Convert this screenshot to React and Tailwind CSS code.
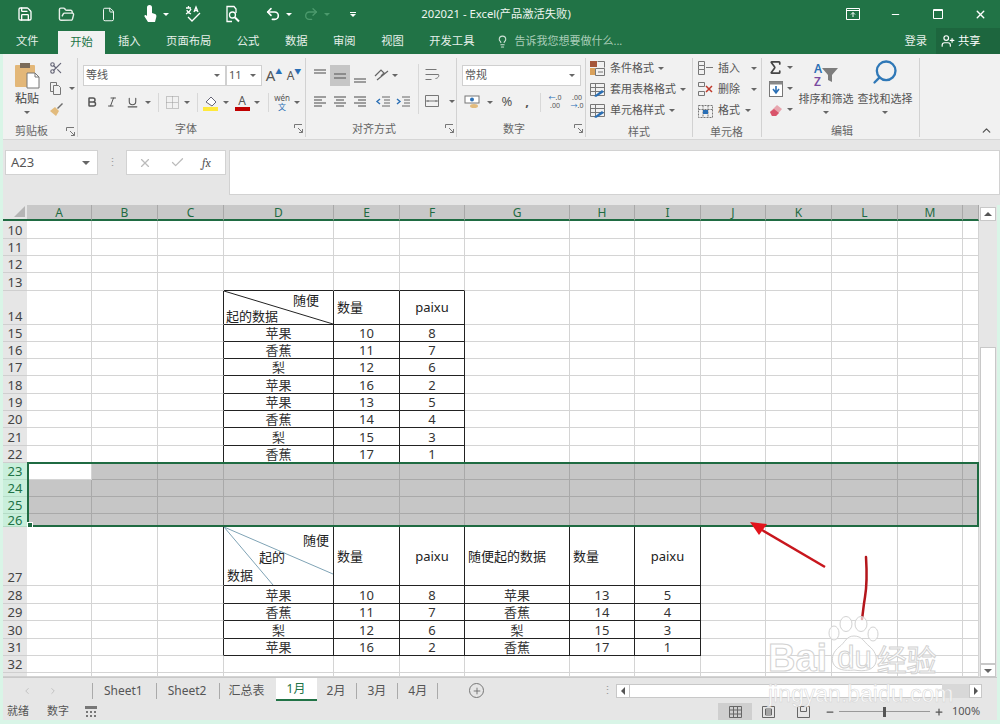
import { Save, FolderOpen, File, Undo2, Redo2, Scissors, Bold, Italic, Underline, Lightbulb, Sigma, X, Check, Plus, Minus, ChevronUp, ChevronLeft, ChevronRight, Search, UserPlus } from "lucide-react";

const colWidths = ["A", "B", "C", "D", "E", "F", "G", "H", "I", "J", "K", "L", "M", ""];
const rowHeights = { 10: "h-[18px]", 11: "h-[17px]", 12: "h-[17px]", 13: "h-[18px]", 14: "h-[34px]", 15: "h-[17px]", 16: "h-[17px]", 17: "h-[17px]", 18: "h-[18px]", 19: "h-[17px]", 20: "h-[17px]", 21: "h-[18px]", 22: "h-[17px]", 23: "h-[17px]", 24: "h-[17px]", 25: "h-[17px]", 26: "h-[13px]", 27: "h-[59px]", 28: "h-[18px]", 29: "h-[17px]", 30: "h-[18px]", 31: "h-[17px]", 32: "h-[17px]", 33: "h-[4px]" };

const firstTable = [
  ["苹果", "10", "8"], ["香蕉", "11", "7"], ["梨", "12", "6"], ["苹果", "16", "2"],
  ["苹果", "13", "5"], ["香蕉", "14", "4"], ["梨", "15", "3"], ["香蕉", "17", "1"],
];
const secondTable = [
  ["苹果", "10", "8", "苹果", "13", "5"], ["香蕉", "11", "7", "香蕉", "14", "4"],
  ["梨", "12", "6", "梨", "15", "3"], ["苹果", "16", "2", "香蕉", "17", "1"],
];

const inTable = (r, c) => (r >= 14 && r <= 22 && c >= 3 && c <= 5) || (r >= 27 && r <= 31 && c >= 3 && c <= 8);

const cellText = (r, c) => {
  if (r >= 15 && r <= 22 && c >= 3 && c <= 5) return firstTable[r - 15][c - 3];
  if (r >= 28 && r <= 31 && c >= 3 && c <= 8) return secondTable[r - 28][c - 3];
  return "";
};

const Caret = ({ className = "" }) => (
  <span className={`inline-block w-0 h-0 border-x-[3px] border-x-transparent border-t-[3px] border-t-[#666] ${className}`} />
);
const WhiteCaret = ({ className = "" }) => (
  <span className={`inline-block w-0 h-0 border-x-[3px] border-x-transparent border-t-[3px] border-t-white ${className}`} />
);

const Launcher = ({ className = "" }) => (
  <svg width="9" height="9" viewBox="0 0 9 9" className={className} fill="none" stroke="#777">
    <path d="M.5 4V.5H8M8.5 8.5L4 4M8.5 5v3.5H5" />
  </svg>
);

const Lines = ({ rows }) => (
  <svg width="16" height="16" viewBox="0 0 16 16" stroke="#666" strokeWidth="1.2">
    {rows.map((l, i) => <path key={i} d={`M${l[0]} ${l[2]}H${l[1]}`} />)}
  </svg>
);

const Group = ({ width, label, labelClass, launcher, children }) => (
  <div className={`${width} h-[79px] mt-1 flex flex-col border-r border-[#d2d2d2] shrink-0`}>
    <div className="h-[64px] flex flex-col">{children}</div>
    <div className="flex-1 flex items-center pt-[3px] text-[11px] text-[#666]">
      <span className={labelClass}>{label}</span>
      {launcher && <Launcher className="ml-auto mr-[2px]" />}
    </div>
  </div>
);

const Combo = ({ width, text }) => (
  <div className={`${width} h-[21px] bg-white border border-[#d0d0d0] flex items-center justify-between px-[2px] text-[11px] text-[#555] shrink-0`}>
    <span>{text}</span>
    <Caret className="mr-[3px]" />
  </div>
);

const Slot = ({ width = "w-5", className = "", children }) => (
  <div className={`${width} h-5 flex items-center justify-center shrink-0 ${className}`}>{children}</div>
);

const Sep = ({ className = "" }) => <div className={`w-px h-[19px] bg-[#d8d8d8] shrink-0 ${className}`} />;

const GridIcon = ({ children }) => (
  <svg width="17" height="17" viewBox="0 0 17 17" fill="none" stroke="#777" className="shrink-0">
    <path d="M1.5 2.5h14v12h-14zM1.5 6.5h14M1.5 10.5h14M6.5 2.5v12" />
    {children}
  </svg>
);

const IconRow = ({ icon, text, caret = "ml-1" }) => (
  <div className="h-[21px] flex items-center text-[11px] text-[#555]">
    {icon}
    <span className="ml-1 whitespace-nowrap">{text}</span>
    <Caret className={caret} />
  </div>
);

const TitleBar = () => (
  <div className="h-[28px] bg-[#217346] flex items-center text-white shrink-0">
    <Save size={16} className="ml-[17px]" />
    <FolderOpen size={17} className="ml-[25px] text-[#e8f0ea]" />
    <File size={15} strokeWidth={1.5} className="ml-[26px]" />
    <svg width="14" height="18" viewBox="0 0 14 18" fill="white" className="ml-[27px]">
      <path d="M4 2.5a2.5 2.5 0 015 0V8l3 1c1.5.6 1.5 2 1.3 3L12 17H5L1.5 11.5c-.5-1 .7-2 1.6-1.2L4 11z" />
    </svg>
    <WhiteCaret className="ml-[6px]" />
    <svg width="18" height="18" viewBox="0 0 18 18" fill="none" stroke="white" strokeWidth="1.3" className="ml-[15px]">
      <path d="M2 3h5M4.5 1v2M3 5c0 2 2 3 4 4M7 4C6 7 4 8 2 9M10 7l2-5 2 5M11 5.5h2M4 12l4 4 8-8" />
    </svg>
    <svg width="18" height="18" viewBox="0 0 18 18" fill="none" stroke="white" strokeWidth="1.3" className="ml-[22px]">
      <path d="M8 16.5H3v-15h7l2 2.500V8" />
      <circle cx="8.500" cy="10" r="3" />
      <path d="M11 12.500l4 4" strokeWidth="2" />
    </svg>
    <Undo2 size={16} strokeWidth={2.4} className="ml-[23px]" />
    <WhiteCaret className="ml-[5px]" />
    <Redo2 size={16} className="ml-[11px] text-[#4c9a6d]" />
    <span className="inline-block w-0 h-0 border-x-[3px] border-x-transparent border-t-[3px] border-t-[#4c9a6d] ml-[5px]" />
    <div className="ml-[20px] flex flex-col items-center gap-[1px]">
      <div className="w-[6px] h-px bg-white" />
      <WhiteCaret />
    </div>
    <span className="ml-[65px] w-[150px] text-center text-[11.3px] whitespace-nowrap text-[#eef5f0]">202021 - Excel(产品激活失败)</span>
    <svg width="14" height="12" viewBox="0 0 14 12" fill="none" stroke="white" className="ml-[275px]">
      <path d="M.5.5h13v11H.5zM.5 2.500h13M7 9V4.500M5 6.500l2-2 2 2" />
    </svg>
    <Minus size={11} strokeWidth={2.5} className="ml-[30px]" />
    <svg width="10" height="10" viewBox="0 0 10 10" fill="none" stroke="white" className="ml-[32px]">
      <path d="M.5.5h9v9h-9zM.5 1.500h9" />
    </svg>
    <X size={13} strokeWidth={2.6} className="ml-[31px]" />
  </div>
);

const TabItem = ({ className, children }) => (
  <span className={`text-[11.3px] text-[#e6f0ea] whitespace-nowrap ${className}`}>{children}</span>
);

const TabBar = () => (
  <div className="h-[26px] bg-[#217346] flex items-center shrink-0">
    <TabItem className="ml-4">文件</TabItem>
    <div className="ml-[19.4px] w-[47px] h-[23px] mt-[3px] bg-[#f1f1f1] text-[#217346] text-[11.3px] flex items-center justify-center">开始</div>
    <TabItem className="ml-[13px]">插入</TabItem>
    <TabItem className="ml-[25.5px]">页面布局</TabItem>
    <TabItem className="ml-[25.5px]">公式</TabItem>
    <TabItem className="ml-[25.5px]">数据</TabItem>
    <TabItem className="ml-[25.5px]">审阅</TabItem>
    <TabItem className="ml-[25.5px]">视图</TabItem>
    <TabItem className="ml-[25.5px]">开发工具</TabItem>
    <Lightbulb size={13} className="ml-[22px] text-[#cfe3d7]" />
    <span className="ml-[5px] text-[11px] text-[#a9cdb8] whitespace-nowrap">告诉我您想要做什么...</span>
    <TabItem className="ml-auto">登录</TabItem>
    <div className="ml-[9px] w-[64px] h-[26px] bg-[#1d663e] flex items-center text-white text-[11.3px]">
      <UserPlus size={14} className="ml-[5px]" />
      <span className="ml-[3px]">共享</span>
    </div>
  </div>
);

const Ribbon = () => (
  <div className="h-[86px] bg-[#f1f1f1] border-b border-[#d6d6d6] flex shrink-0 text-[#555]">
    <Group width="w-[75px]" label="剪贴板" labelClass="ml-3" launcher>
      <div className="flex h-full">
        <div className="ml-[9px] w-[30px] flex flex-col items-center">
          <svg width="26" height="27" viewBox="0 0 26 27" className="mt-[4px]">
            <rect x="1" y="3" width="20" height="22" rx="1" fill="#e3b778" />
            <rect x="6" y="1" width="10" height="5" fill="#7b6b59" />
            <path d="M13 11h8l4 4v11H13z" fill="white" stroke="#777" />
            <path d="M21 11v4h4" fill="none" stroke="#777" />
          </svg>
          <span className="text-[12px] leading-[14px] mt-[3px] text-[#444]">粘贴</span>
          <Caret className="mt-[5px]" />
        </div>
        <div className="ml-[2px] -mt-[1px] flex flex-col">
          <Slot width="w-6" className="h-[21px]"><Scissors size={14} className="text-[#667]" /></Slot>
          <div className="h-[21px] flex items-center">
            <svg width="15" height="15" viewBox="0 0 15 15" fill="none" stroke="#777" className="ml-1">
              <path d="M2.500 1.500h6v3M2.500 1.500v9h3M5.500 4.500h5l2 2v7h-7z" />
            </svg>
            <Caret className="ml-[6px]" />
          </div>
          <Slot width="w-6" className="h-[21px]">
            <svg width="15" height="15" viewBox="0 0 15 15">
              <path d="M1 9l5-4 4 4-3 5z" fill="#e2bb7d" />
              <path d="M8 6l5-5 1 1-5 5z" fill="#6d6d6d" />
            </svg>
          </Slot>
        </div>
      </div>
    </Group>

    <Group width="w-[228px]" label="字体" labelClass="ml-[97px]" launcher>
      <div className="pl-[5px] pt-[7px] flex items-center">
        <Combo width="w-[143px]" text="等线" />
        <Combo width="w-[36px]" text="11" />
        <Slot className="ml-[2px] text-[15px] text-[#555]">A<sup className="text-[7px] text-[#2a6fb5]">▲</sup></Slot>
        <Slot className="text-[12px] text-[#555]">A<sup className="text-[7px] text-[#2a6fb5]">▼</sup></Slot>
      </div>
      <div className="mt-[6px] flex items-center">
        <Slot className="ml-[4px]"><Bold size={12} strokeWidth={3} /></Slot>
        <Slot><Italic size={12} /></Slot>
        <Slot><Underline size={13} /></Slot>
        <Slot width="w-3"><Caret /></Slot>
        <Sep className="ml-1" />
        <Slot className="ml-[3px]">
          <svg width="13" height="13" viewBox="0 0 13 13" fill="none" stroke="#999" strokeDasharray="1 1">
            <path d="M.5.5h12v12H.5zM6.500.5v12M.5 6.500h12" />
          </svg>
        </Slot>
        <Slot width="w-[10px]"><Caret /></Slot>
        <Sep className="ml-[5px]" />
        <Slot className="ml-[3px]">
          <svg width="16" height="17" viewBox="0 0 16 17">
            <path d="M3 8l5-5 5 5-4 4z" fill="white" stroke="#667" />
            <rect x="0" y="13" width="15" height="4" fill="#ffe93b" />
          </svg>
        </Slot>
        <Slot width="w-[10px]"><Caret /></Slot>
        <Slot className="ml-[1px] flex-col">
          <span className="text-[12px] leading-[13px] text-[#555]">A</span>
          <span className="w-[15px] h-[4px] bg-[#c00000]" />
        </Slot>
        <Slot width="w-[10px]"><Caret /></Slot>
        <Sep className="ml-[6px]" />
        <Slot className="ml-[3px] flex-col">
          <span className="text-[8px] leading-[8px]">wén</span>
          <span className="text-[8px] leading-[9px] text-[#2a6fb5]">文</span>
        </Slot>
        <Slot width="w-[9px]"><Caret /></Slot>
      </div>
    </Group>

    <Group width="w-[151px]" label="对齐方式" labelClass="ml-[46px]" launcher>
      <div className="flex">
        <div className="pl-[4px] pt-[7px] flex flex-col">
          <div className="flex items-center">
            <Slot><Lines rows={[[2, 14, 2], [2, 14, 5]]} /></Slot>
            <div className="w-5 h-[21px] bg-[#c6c6c6] flex items-center justify-center"><Lines rows={[[2, 14, 6], [2, 14, 10]]} /></div>
            <Slot><Lines rows={[[2, 14, 11], [2, 14, 14]]} /></Slot>
            <Slot className="ml-[2px]">
              <svg width="17" height="15" viewBox="0 0 17 15" fill="none" stroke="#666" strokeWidth="1.2">
                <path d="M1 8l6-6 3 3-3 3M3 12L14 3" />
              </svg>
            </Slot>
            <Slot width="w-[6px]"><Caret /></Slot>
          </div>
          <div className="mt-[6px] flex items-center">
            <Slot><Lines rows={[[2, 14, 3], [2, 10, 6], [2, 14, 9], [2, 10, 12]]} /></Slot>
            <Slot><Lines rows={[[2, 14, 3], [4, 12, 6], [2, 14, 9], [4, 12, 12]]} /></Slot>
            <Slot><Lines rows={[[2, 14, 3], [6, 14, 6], [2, 14, 9], [6, 14, 12]]} /></Slot>
            <Slot className="ml-[3px]">
              <svg width="16" height="16" viewBox="0 0 16 16" fill="none" stroke="#666">
                <path d="M7 3h8M9 6h6M9 9h6M7 12h8" />
                <path d="M5 5L2 7.500 5 10" stroke="#2a6fb5" strokeWidth="1.4" />
              </svg>
            </Slot>
            <Slot>
              <svg width="16" height="16" viewBox="0 0 16 16" fill="none" stroke="#666">
                <path d="M7 3h8M9 6h6M9 9h6M7 12h8" />
                <path d="M2 5l3 2.500L2 10" stroke="#2a6fb5" strokeWidth="1.4" />
              </svg>
            </Slot>
          </div>
        </div>
        <Sep className="ml-[5px] mt-[6px] !h-[50px]" />
        <div className="pt-[7px] flex flex-col">
          <Slot className="ml-[3px]">
            <svg width="16" height="16" viewBox="0 0 16 16" fill="none" stroke="#777">
              <path d="M1.500 2.500h11M1.500 7.500h13c1 2-1 4-3 4M1.500 12.500h6" />
            </svg>
          </Slot>
          <div className="mt-[6px] flex items-center">
            <Slot className="ml-[3px]">
              <svg width="16" height="16" viewBox="0 0 16 16" fill="none" stroke="#777">
                <path d="M1.500 2.500h13v11h-13zM1.500 8h13M5 8l-2 0M11 8h2" />
              </svg>
            </Slot>
            <Slot width="w-[10px]" className="ml-[5px]"><Caret /></Slot>
          </div>
        </div>
      </div>
    </Group>

    <Group width="w-[129px]" label="数字" labelClass="ml-[46px]" launcher>
      <div className="pl-[5px] pt-[7px]"><Combo width="w-[119px]" text="常规" /></div>
      <div className="mt-[6px] flex items-center">
        <Slot className="ml-[5px]">
          <svg width="16" height="16" viewBox="0 0 16 16">
            <rect x="1" y="2" width="14" height="7" fill="#fff" stroke="#777" />
            <circle cx="8" cy="5.500" r="2" fill="#2a6fb5" />
            <ellipse cx="10" cy="12" rx="4" ry="2" fill="#e2bb7d" />
          </svg>
        </Slot>
        <Slot width="w-[8px]" className="ml-1"><Caret /></Slot>
        <Slot className="ml-[3px] text-[13px]">%</Slot>
        <Slot className="text-[13px] font-bold">,</Slot>
        <Sep className="ml-[3px]" />
        <Slot width="w-[22px]" className="ml-[3px] flex-col text-[7px] leading-[8px]">
          <span><span className="text-[#2a6fb5]">←</span>.0</span>
          <span>.00</span>
        </Slot>
        <Slot width="w-[22px]" className="flex-col text-[7px] leading-[8px]">
          <span>.00</span>
          <span><span className="text-[#2a6fb5]">→</span>.0</span>
        </Slot>
      </div>
    </Group>

    <Group width="w-[107px]" label="样式" labelClass="ml-[42px]">
      <div className="pl-[3px]">
        <IconRow text="条件格式" icon={
          <svg width="17" height="17" viewBox="0 0 17 17" fill="none" stroke="#777" className="shrink-0">
            <rect x="1" y="1" width="7" height="6" fill="#a5573a" stroke="none" />
            <rect x="1" y="8" width="5" height="7" fill="#d9a15b" stroke="none" />
            <path d="M8.500 1.500h7v6M6.500 8.500h9v7h-9zM9 12h5" />
          </svg>
        } />
        <IconRow text="套用表格格式" icon={<GridIcon><path d="M5 15l8-6 2 2-8 5z" fill="#2a6fb5" stroke="none" /></GridIcon>} />
        <IconRow text="单元格样式" icon={<GridIcon><path d="M5 15l8-6 2 2-8 5z" fill="#2a6fb5" stroke="none" /></GridIcon>} />
      </div>
    </Group>

    <Group width="w-[69px]" label="单元格" labelClass="ml-[17px]">
      <div className="pl-[4px]">
        <IconRow text="插入" caret="ml-[11px]" icon={
          <svg width="17" height="17" viewBox="0 0 17 17" fill="none" stroke="#777" className="shrink-0">
            <path d="M1.500 1.500h6v4h-6zM1.500 5.500v4h6v-4M1.500 9.500v5h6v-5M9 7.500h7" />
          </svg>
        } />
        <IconRow text="删除" caret="ml-[11px]" icon={
          <svg width="17" height="17" viewBox="0 0 17 17" fill="none" stroke="#777" className="shrink-0">
            <path d="M1.500 1.500h6v4h-6zM1.500 10.500h6v4h-6z" />
            <path d="M9 5l6 6M15 5l-6 6" stroke="#c0392b" strokeWidth="1.5" />
          </svg>
        } />
        <IconRow text="格式" caret="ml-[5px]" icon={
          <svg width="17" height="17" viewBox="0 0 17 17" fill="none" stroke="#777" className="shrink-0" strokeDasharray="2 1">
            <path d="M1.500 3.500h14v12h-14zM1.500 7.500h14M6 3.500v12M11 3.500v12" />
            <rect x="6" y="8" width="5" height="4" fill="#2a6fb5" stroke="none" />
          </svg>
        } />
      </div>
    </Group>

    <Group width="w-[158px]" label="编辑" labelClass="ml-[69px]">
      <div className="flex">
        <div className="pl-[5px] -mt-[1px] w-[34px] shrink-0">
          <div className="h-[21px] flex items-center">
            <Sigma size={17} strokeWidth={2.4} className="text-[#444]" />
            <Caret className="ml-[3px]" />
          </div>
          <div className="h-[21px] flex items-center">
            <svg width="15" height="16" viewBox="0 0 15 16" className="ml-[2px]">
              <rect x=".5" y=".5" width="13" height="15" fill="#fff" stroke="#777" />
              <rect x=".5" y=".5" width="13" height="3" fill="#888" />
              <path d="M7 5v6M4 8l3 4 3-4" stroke="#2a6fb5" strokeWidth="1.6" fill="none" />
            </svg>
            <Caret className="ml-[3px]" />
          </div>
          <div className="h-[21px] flex items-center">
            <svg width="15" height="14" viewBox="0 0 15 14" className="ml-[2px]">
              <path d="M1 9l7-7 5 4-6 7H3z" fill="#e7a5ae" />
              <path d="M1 9l4-3 5 4-3 3H3z" fill="#d9536a" />
            </svg>
            <Caret className="ml-[3px]" />
          </div>
        </div>
        <div className="w-[60px] flex flex-col items-center shrink-0">
          <div className="h-[31px] mt-[1px] flex items-center">
            <div className="flex flex-col text-[12px] leading-[13px] font-semibold text-[#2a6fb5]">
              <span>A</span>
              <span className="text-[#7a4aa0]">Z</span>
            </div>
            <svg width="16" height="16" viewBox="0 0 16 16" fill="#7d7d7d"><path d="M0 1h16L10 8v7l-4-2V8z" /></svg>
          </div>
          <span className="text-[11px] leading-[14px] mt-[2px] whitespace-nowrap">排序和筛选</span>
          <Caret className="mt-[5px]" />
        </div>
        <div className="w-[58px] flex flex-col items-center shrink-0">
          <div className="h-[31px] -mt-[2px] flex items-center">
            <Search size={28} strokeWidth={2} className="text-[#2f78b7] -scale-x-100" />
          </div>
          <span className="text-[11px] leading-[14px] mt-[5px] whitespace-nowrap">查找和选择</span>
          <Caret className="mt-[5px]" />
        </div>
      </div>
    </Group>

    <div className="flex-1 flex items-end justify-end pr-[7px] pb-[2px]">
      <ChevronUp size={13} strokeWidth={2.4} />
    </div>
  </div>
);

const FormulaBar = () => (
  <div className="h-[65px] bg-[#e6e6e6] flex pt-[10px] shrink-0">
    <div className="ml-[2px] w-[93px] h-[25px] bg-white border border-[#d2d2d2] flex items-center justify-between px-[5px] text-[13px] text-[#555]">
      <span>A23</span>
      <Caret className="mr-[2px] border-x-[4px] border-t-[4px]" />
    </div>
    <div className="w-7 h-[25px] flex items-center justify-center text-[#999] text-[11px]">⋮</div>
    <div className="w-[100px] h-[25px] bg-white border border-[#d2d2d2] flex items-center text-[#bbb]">
      <X size={14} className="ml-[11px]" />
      <Check size={15} className="ml-[18px]" />
      <span className="ml-[17px] text-[12px] italic font-serif text-[#555]">fx</span>
    </div>
    <div className="ml-[3px] flex-1 h-[45px] bg-white border border-[#d2d2d2]" />
  </div>
);

const CellBody = ({ r, c }) => {
  if (r === 14 && c === 3) {
    return (
      <div className="w-full h-full flex flex-col text-[#222]">
        <svg className="absolute inset-0 w-full h-full" viewBox="0 0 109 33" preserveAspectRatio="none">
          <path d="M0 0L109 33" stroke="#222" />
        </svg>
        <span className="self-end mr-[14px] mt-[1px] leading-[16px]">随便</span>
        <span className="ml-[2px] leading-[16px]">起的数据</span>
      </div>
    );
  }
  if (r === 27 && c === 3) {
    return (
      <div className="w-full h-full flex flex-col text-[#222]">
        <svg className="absolute inset-0 w-full h-full" viewBox="0 0 109 58" preserveAspectRatio="none">
          <path d="M0 0L49 58M0 0L109 47" stroke="#7fa3b5" fill="none" />
        </svg>
        <span className="self-end mr-[4px] mt-[5px] leading-[16px]">随便</span>
        <span className="ml-[35px] mt-[1px] leading-[16px]">起的</span>
        <span className="ml-[3px] mt-[2px] leading-[16px]">数据</span>
      </div>
    );
  }
  if ((r === 14 && c === 4) || (r === 27 && (c === 4 || c === 7))) {
    return <span className="w-full h-full flex items-center pl-[3px] text-[#222]">数量</span>;
  }
  if ((r === 14 && c === 5) || (r === 27 && (c === 5 || c === 8))) {
    return <span className="w-full h-full flex items-center justify-center text-[#222]">paixu</span>;
  }
  if (r === 27 && c === 6) {
    return <span className="w-full h-full flex items-center pl-[3px] text-[#222] whitespace-nowrap">随便起的数据</span>;
  }
  return cellText(r, c);
};

const SheetGrid = () => {
  const rows = Object.keys(rowHeights).map(Number);
  return (
    <div className="relative grid grid-cols-[24px_65px_66px_66px_110px_66px_65px_105px_65px_66px_65px_66px_66px_65px_16px] w-[976px] text-[13px] text-[#333] overflow-hidden">
      <div className="h-[16px] bg-[#e6e6e6] border-b-2 border-[#1f6b42] flex items-end justify-end">
        <span className="w-0 h-0 mr-[2px] mb-[2px] border-l-[11px] border-l-transparent border-b-[11px] border-b-[#b5b5b5]" />
      </div>
      {colWidths.map((c, i) => (
        <div key={i} className="h-[16px] pt-[1px] bg-[#c8c8c8] border-r border-r-[#a8a8a8] border-b-2 border-b-[#1f6b42] text-[#1f6b42] text-[12px] leading-[13px] text-center">{c}</div>
      ))}
      {rows.map((r) => {
        const selected = r >= 23 && r <= 26;
        return [
          <div key={r} className={`${rowHeights[r]} border-b flex items-end justify-center overflow-hidden ${r === 26 ? "leading-[12px]" : "leading-[16px]"} ${selected ? "bg-[#c9efdb] border-[#b5dcc6] text-[#217346]" : "bg-[#e6e6e6] border-[#cfcfcf] text-[#444]"}`}>
            {r < 33 ? r : ""}
          </div>,
          ...colWidths.map((_, c) => {
            const active = r === 23 && c === 0;
            const gray = selected && !active;
            const right = inTable(r, c) || inTable(r, c + 1);
            const bottom = inTable(r, c) || inTable(r + 1, c);
            const base = gray ? "bg-[#c6c6c6]" : "bg-white";
            const rightLine = right ? "border-r-[#222]" : gray ? "border-r-[#a9a9a9]" : "border-r-[#d4d4d4]";
            const bottomLine = bottom ? "border-b-[#222]" : gray ? "border-b-[#a9a9a9]" : "border-b-[#d4d4d4]";
            return (
              <div key={`${r}-${c}`} className={`${rowHeights[r]} ${base} ${rightLine} ${bottomLine} border-r border-b relative overflow-hidden flex items-end justify-center leading-[15px]`}>
                <CellBody r={r} c={c} />
              </div>
            );
          }),
        ];
      })}
      <div className="absolute inset-0 [grid-area:15/2/19/-1] -mt-px border-2 border-[#1f6b42] pointer-events-none">
        <span className="absolute -left-[2px] -bottom-[3px] w-[6px] h-[6px] bg-[#1f6b42] border border-white" />
      </div>
    </div>
  );
};

const VerticalScroll = () => (
  <div className="w-[18px] bg-[#e6e6e6] flex flex-col items-center shrink-0">
    <div className="h-[2px] w-full" />
    <div className="h-[14px] w-[16px] bg-white border border-[#c8c8c8] flex items-center justify-center">
      <span className="w-0 h-0 border-x-[4px] border-x-transparent border-b-[4px] border-b-[#555]" />
    </div>
    <div className="h-[126px]" />
    <div className="flex-1 w-[16px] bg-white border border-[#c8c8c8]" />
    <div className="h-[13px] w-[16px] bg-white border border-[#c8c8c8] flex items-center justify-center">
      <Caret className="border-x-[4px] border-t-[4px]" />
    </div>
  </div>
);

const SheetTab = ({ name, className }) => (
  <span className={`text-[12px] text-[#555] whitespace-nowrap ${className}`}>{name}</span>
);
const TabSep = ({ className }) => <div className={`w-px h-[16px] bg-[#aaa] shrink-0 ${className}`} />;

const SheetTabs = () => (
  <div className="h-[26px] bg-[#e6e6e6] border-t border-[#c8c8c8] flex items-center">
    <ChevronLeft size={10} className="ml-[19px] text-[#bbb]" />
    <ChevronRight size={10} className="ml-[16px] text-[#bbb]" />
    <TabSep className="ml-[34px]" />
    <SheetTab name="Sheet1" className="ml-[11px]" />
    <TabSep className="ml-[13px]" />
    <SheetTab name="Sheet2" className="ml-[11px]" />
    <TabSep className="ml-[12px]" />
    <SheetTab name="汇总表" className="ml-[9px]" />
    <div className="ml-[11px] w-[41px] h-[23px] -mt-[2px] bg-white border-b-2 border-[#217346] text-[#217346] text-[12px] flex items-center justify-center">1月</div>
    <SheetTab name="2月" className="ml-[10px]" />
    <TabSep className="ml-[11px]" />
    <SheetTab name="3月" className="ml-[10px]" />
    <TabSep className="ml-[11px]" />
    <SheetTab name="4月" className="ml-[10px]" />
    <TabSep className="ml-[10px]" />
    <div className="ml-[31px] w-[15px] h-[15px] rounded-full border border-[#777] flex items-center justify-center">
      <Plus size={10} className="text-[#666]" />
    </div>
    <span className="ml-[118px] w-[14px] text-[#999] text-[11px]">⋮</span>
    <div className="w-[14px] h-[14px] bg-white border border-[#c8c8c8] flex items-center justify-center">
      <span className="w-0 h-0 border-y-[4px] border-y-transparent border-r-[4px] border-r-[#555]" />
    </div>
    <div className="w-[339px] h-[14px] bg-[#d8d8d8] flex">
      <div className="w-[312px] bg-white border-y border-[#c8c8c8]" />
    </div>
    <div className="w-[13px] h-[14px] bg-white border border-[#c8c8c8] flex items-center justify-center">
      <span className="w-0 h-0 border-y-[4px] border-y-transparent border-l-[4px] border-l-[#555]" />
    </div>
  </div>
);

const StatusBar = () => (
  <div className="h-[17px] bg-[#e6e6e6] flex items-center text-[11px] text-[#555]">
    <span className="ml-1">就绪</span>
    <span className="ml-[18px]">数字</span>
    <svg width="12" height="12" viewBox="0 0 12 12" className="ml-[16px]" fill="#777">
      <rect x="0" y="0" width="12" height="3" />
      <path d="M1 5h2v2H1zM5 5h2v2H5zM9 5h2v2H9zM1 9h2v2H1zM5 9h2v2H5zM9 9h2v2H9z" />
    </svg>
    <div className="ml-[621px] w-[34px] h-[17px] bg-[#cfcfcf] flex items-center justify-center">
      <svg width="13" height="12" viewBox="0 0 13 12" fill="none" stroke="#666">
        <path d="M.5.5h12v11H.5zM4.500.5v11M8.500.5v11M.5 4h12M.5 8h12" />
      </svg>
    </div>
    <svg width="13" height="12" viewBox="0 0 13 12" fill="none" stroke="#666" className="ml-[10px]">
      <path d="M.5.5h12v11H.5zM3.500 3h6v6h-6zM3.500 5h6M3.500 7h6" />
    </svg>
    <svg width="13" height="12" viewBox="0 0 13 12" fill="none" stroke="#666" className="ml-[22px]">
      <path d="M.5.5h12v11H.5zM3.500.5v5h6v-5" />
    </svg>
    <Minus size={10} strokeWidth={3} className="ml-[15px]" />
    <div className="ml-1 w-[91px] h-px bg-[#999] flex items-center justify-center">
      <span className="w-[3px] h-[10px] bg-[#555]" />
    </div>
    <Plus size={10} strokeWidth={3} className="ml-1" />
    <span className="ml-[8px]">100%</span>
  </div>
);

const Annotations = () => (
  <>
    <svg className="absolute left-[720px] top-[510px] pointer-events-none" width="170" height="125" viewBox="720 510 170 125" fill="none">
      <path d="M825 567L762 530" stroke="#c8161d" strokeWidth="2.500" />
      <path d="M750 522l17 2-8 11z" fill="#e3141c" />
      <path d="M866 557c1 16 1 28-1 40s-2 16-3 22" stroke="#b4161c" strokeWidth="2.500" strokeLinecap="round" />
    </svg>
    <div className="absolute left-[768px] top-[616px] w-[180px] pointer-events-none text-white/80 [-webkit-text-stroke:1px_#d2d2d2]">
      <svg width="56" height="58" viewBox="0 0 56 58" className="ml-[59px] mb-[-32px]" fill="#ffffff" fillOpacity="0.65" stroke="#d2d2d2">
        <ellipse cx="7" cy="17" rx="5" ry="7" />
        <ellipse cx="19" cy="8" rx="6" ry="7.500" />
        <ellipse cx="34" cy="8" rx="6" ry="7.500" />
        <ellipse cx="46" cy="18" rx="5" ry="7" />
        <path d="M27 20c8 0 10 6 15 10 6 5 8 10 7 16-2 8-11 10-22 8-9 1-18 0-21-7-2-6 1-12 6-16 6-4 7-11 15-11z" />
      </svg>
      <div className="flex items-end h-[32px] leading-[32px] font-bold whitespace-nowrap [font-family:'Liberation_Sans',sans-serif]">
        <span className="text-[38px]">Bai</span>
        <span className="ml-[10px] text-[31px] font-normal">du</span>
        <span className="ml-[5px] text-[30px] font-normal [font-family:'Noto_Sans_CJK_SC',sans-serif]">经验</span>
      </div>
      <div className="text-[23px] leading-[24px] mt-[8px] whitespace-nowrap [-webkit-text-stroke:0.5px_#d2d2d2] [font-family:'Liberation_Sans',sans-serif]">jingyan.baidu.com</div>
    </div>
  </>
);

export default function App() {
  return (
    <div className="relative w-[1000px] h-[724px] overflow-hidden bg-[#d9f5e7] [font-family:'Noto_Sans','Noto_Sans_CJK_SC',sans-serif]">
      <TitleBar />
      <TabBar />
      <div className="ml-[3px]">
        <Ribbon />
        <FormulaBar />
        <div className="w-[994px] flex h-[472px] overflow-hidden">
          <SheetGrid />
          <VerticalScroll />
        </div>
        <div className="w-[994px]">
          <SheetTabs />
          <StatusBar />
        </div>
      </div>
      <Annotations />
    </div>
  );
}
